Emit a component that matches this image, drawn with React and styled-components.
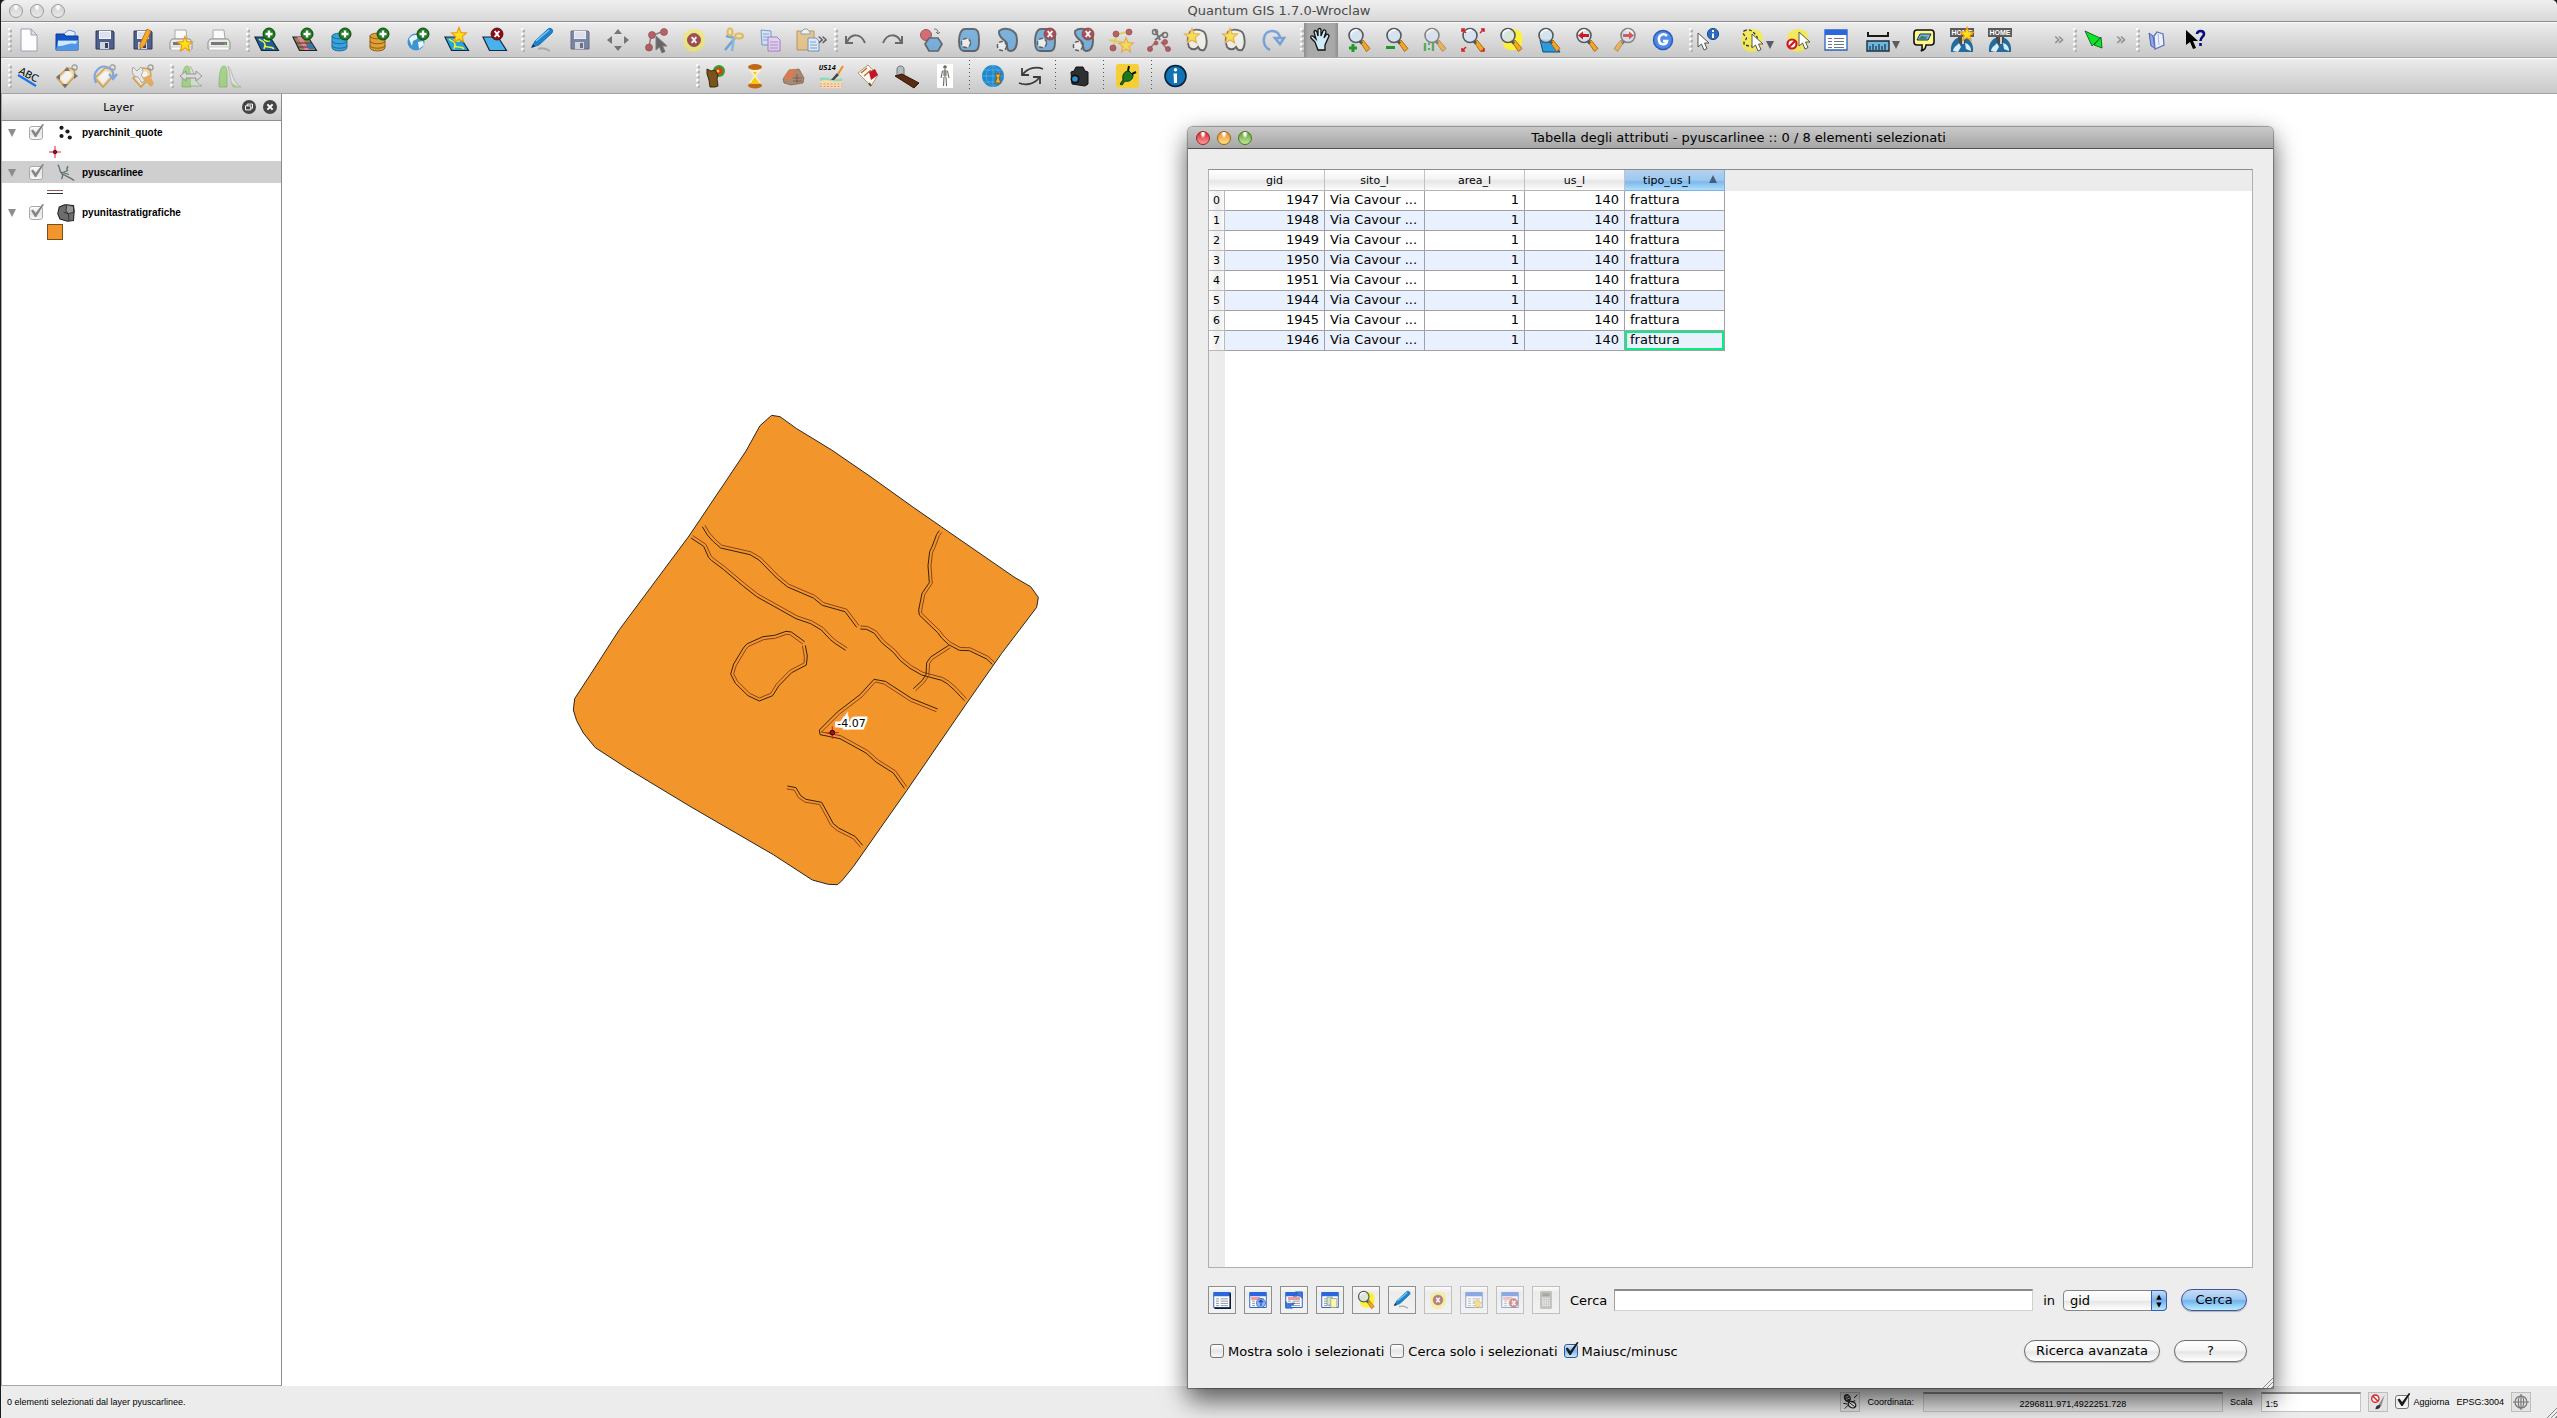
import React, { useState } from "react";
import styled, { createGlobalStyle, css } from "styled-components";

const UI = '"DejaVu Sans", "Noto Sans", sans-serif';
const SMALL = '"Liberation Sans", Arial, sans-serif';

const Global = createGlobalStyle`
  *, *::before, *::after { box-sizing: border-box; }
  html, body { margin: 0; height: 100%; background: #1b1b1f; overflow: hidden; }
  body { font-family: ${UI}; font-size: 13px; color: #000; }
  button, input, select { font: inherit; color: inherit; margin: 0; }
`;

/* ---------- icon drawings, all on a 24 x 24 grid ---------- */

const Plus = ({ x = 14, y = 6 }) => (
  <g>
    <circle cx={x} cy={y} r="6" fill="#1f7a22" stroke="#0c4a10" />
    <path d={`M${x - 3.5} ${y}h7M${x} ${y - 3.5}v7`} stroke="#fff" strokeWidth="2.4" />
  </g>
);
const Cross = ({ x = 14, y = 6, r = 6, fill = "#8c0d14" }) => (
  <g>
    <circle cx={x} cy={y} r={r} fill={fill} stroke="#4e0509" strokeWidth=".8" />
    <path d={`M${x - 2.3} ${y - 3}l4.6 6M${x + 2.3} ${y - 3}l-4.6 6`} stroke="#fff" strokeWidth="2" />
  </g>
);
const STAR = "M0-7.5L2-2.4 7.4-2 3.2 1.6 4.6 7 0 4-4.6 7-3.2 1.6-7.4-2-2-2.4Z";
const Star = ({ x, y, s = 1 }) => (
  <path d={STAR} transform={`translate(${x} ${y}) scale(${s})`} fill="#ffe01a" stroke="#f09a12" strokeWidth="1.2" />
);
const Lens = ({ children, under }) => (
  <g>
    {under}
    <path d="M13 14l3-2 7 8.5-3.5 3z" fill="#f3a526" stroke="#9a5c0c" strokeWidth=".8" />
    <path d="M12 12.5l3 3" stroke="#555" strokeWidth="2.6" />
    <circle cx="9" cy="7.5" r="7" fill="#d4e4f3" fillOpacity=".85" stroke="#55595e" strokeWidth="1.6" />
    <path d="M4 6a5.4 5.4 0 0 1 7-3.6" stroke="#fff" strokeWidth="1.4" fill="none" />
    {children}
  </g>
);
const Sheet = ({ fill, stroke = "#14263a" }) => (
  <path d="M0 9h15l8.5 13.5H6.5z" fill={fill} stroke={stroke} strokeWidth="1.2" />
);
const Vec = () => (
  <path d="M4 11c3 3 6 2 6 6s6 0 9 4M9 11c1 3 5 2 6 2M10 17l-1 4" stroke="#e4ef3c" strokeWidth="1.5" fill="none" />
);
const Disk = () => (
  <g>
    <path d="M3 3h17l1 1v17H3z" fill="#4e5f8e" stroke="#2e3858" />
    <path d="M6 3h12v8H6z" fill="#f4f6fb" />
    <path d="M7 5h10M7 7h10M7 9h10" stroke="#b9c2d6" strokeWidth=".8" />
    <path d="M7 14h9v7H7z" fill="#cfd4de" />
    <path d="M12 15h3v5h-3z" fill="#39415c" />
  </g>
);
const Printer = () => (
  <g>
    <path d="M6 2h11l1 9H6z" fill="#fafafa" stroke="#a9a9a9" />
    <path d="M3 11h18l2 3v7H1v-7z" fill="#e9e9e9" stroke="#8f8f8f" />
    <path d="M4 14h16v3H4z" fill="#777" />
    <path d="M2 19h20v3H2z" fill="#fbfbfb" stroke="#b3b3b3" strokeWidth=".6" />
    <circle cx="18" cy="16" r="1" fill="#62c34a" />
  </g>
);
const Cyl = ({ a, b }) => (
  <g stroke={b} strokeWidth=".9" fill={a}>
    <path d="M1 8v11.500c0 4.500 15 4.500 15 0V8z" />
    <ellipse cx="8.500" cy="8" rx="7.500" ry="2.800" />
    <path d="M1 13c0 3.600 15 3.600 15 0M1 17.500c0 3.600 15 3.600 15 0" fill="none" />
  </g>
);
const Globe = () => (
  <g>
    <circle cx="9" cy="14" r="8.500" fill="#3f93cf" />
    <path d="M2 11c3-5 6-4 9-4l-1 4-4 2-1 5zM11 14l5-1 1 4-5 4z" fill="#e8f4fb" />
  </g>
);
const Node = ({ x, y, r = 3 }) => <circle cx={x} cy={y} r={r} fill="#a8242c" stroke="#651015" strokeWidth=".7" />;
const Pointer = ({ x = 0, y = 0, fill = "#fff" }) => (
  <path d="M0 0v14l3.500-3 2.500 6 3-1.500-2.500-5.500H11z" transform={`translate(${x} ${y})`} fill={fill} stroke="#555" strokeWidth="1" />
);
const Tag = () => (
  <g>
    <path d="M2 14L12 4l7 1 1 7-10 11z" fill="#f6d79a" stroke="#c98a1c" strokeWidth="1.6" />
    <path d="M5 14l7-7 4 1 1 4-7 8z" fill="#fff" />
    <circle cx="19.500" cy="3.500" r="2.600" fill="none" stroke="#777" strokeWidth="1.200" />
  </g>
);
const Grid = () => (
  <g>
    <path d="M1 2h22v20H1z" fill="#fff" stroke="#2c62bf" strokeWidth="1.300" />
    <path d="M1 2h22v5H1z" fill="#2a66dd" />
    <path d="M4 10.500h4M10 10.500h10M4 13.500h4M10 13.500h10M4 16.500h4M10 16.500h10M4 19.500h4M10 19.500h10" stroke="#6d7682" />
  </g>
);
const Pencil = () => (
  <g>
    <path d="M8 21c5-2 9 0 12 2" stroke="#a9a9a9" strokeWidth="1.800" fill="none" />
    <path d="M2 19l3-6L18 1c3-2 6 1 4 4L9 17z" fill="#1c83d0" stroke="#1465a8" strokeWidth=".8" />
    <path d="M6 13L19 2" stroke="#7cc5f3" strokeWidth="1.600" />
    <path d="M1 20l2-4 2.500 2.500z" fill="#0a3d6e" />
  </g>
);
const Blob = ({ d }) => <path d={d} fill="#4c9cd8" stroke="#2c3238" strokeWidth="1.900" />;
const Hole = ({ x, y }) => (
  <circle cx={x} cy={y} r="4.600" fill="#f6f6f6" stroke="#2a2a2a" strokeWidth="1.500" strokeDasharray="4 2" />
);
const FULL = "M8 1h9c4 0 5 4 5 10s0 12-5 12H7c-4 0-5-4-5-10S4 1 8 1z";
const HALF = "M4 3c5-4 18-3 18 9 0 8-3 11-7 11-3 0-3-3-3-7s-9-5-8-13z";
const GHOST = "M5 4c4-4 15-3 16 4 1 5 1 11-2 14-3 1-5-1-6-3-2 3-7 3-9 0-2-5-1-11 1-15z";
const Home = () => (
  <g>
    <path d="M1 24C0 15 5 9 12 9s12 6 11 15z" fill="#256b9e" />
    <path d="M3 23c1-5 4-5 6-8l2 4-3 5zM15 15c4 1 6 4 6 8l-5-2z" fill="#d9edf7" />
    <path d="M8 9h8l-1 6q-3 3-6 0z" fill="#4a4a4a" />
    <path d="M12 9h2v7h-2z" fill="#cfcfcf" />
    <rect y="0" width="24" height="9" fill="#5b5b5b" />
    <text x="12" y="7" fontSize="7" fontWeight="700" textAnchor="middle" fill="#fff" fontFamily="Liberation Sans">HOME</text>
  </g>
);
const Halo = () => <path d="M5 3c6-4 16-2 17 4 2 6 0 14-6 16S3 23 2 16 1 6 5 3z" fill="#f6ec3c" fillOpacity=".8" />;

const ICONS = {
  file: <path d="M4 1h10l6 6v16H4zM14 1v6h6" fill="#fdfdff" stroke="#9aa0ac" />,
  open: <g><path d="M6 8l8-6 6 2v5z" fill="#e6f0fb" stroke="#6c94cf" /><path d="M1 6h8l2 2h12v14H1z" fill="#1553c4" stroke="#0e3c92" /><path d="M1 22l2-10h20v10z" fill="#4f96ea" /><path d="M3 13h19l-1 3c-6-2-10 2-18 2z" fill="#cfe6fb" /></g>,
  save: <Disk />,
  saveAs: <g><Disk /><path d="M9 16L16 1l4 2-6 14-5 4z" fill="#f7a928" stroke="#b86b0b" strokeWidth=".8" /></g>,
  printNew: <g><Printer /><Star x={16} y={16} /></g>,
  print: <Printer />,
  addVector: <g><Sheet fill="#1c5fa0" /><Vec /><Plus /></g>,
  addRaster: <g><Sheet fill="#9e7d55" /><path d="M4 9h5l7 13h-4z" fill="#ee7f97" /><path d="M3 15h16M5 19h16" stroke="#3c3a36" /><path d="M13 16h6l3 5h-6z" fill="#3674ad" /><Plus /></g>,
  addDb: <g><Cyl a="#37a3dc" b="#17648f" /><Plus /></g>,
  addDb2: <g><Cyl a="#dfa136" b="#80520d" /><Plus /></g>,
  addWms: <g><Globe /><Plus x={16} /></g>,
  newVector: <g><Sheet fill="#2aa3d8" /><Vec /><Star x={14} y={7} /></g>,
  removeLayer: <g><Sheet fill="#49b1ec" /><Cross /></g>,
  pencil: <Pencil />,
  move: <path d="M12 1l4 5H8zM12 23l4-5H8zM1 12l5-4v8zM23 12l-5-4v8z" fill="#444" />,
  node: <g><path d="M5 19L7 8l13-5" stroke="#555" strokeWidth="1.400" fill="none" /><Node x={5} y={19.500} r={3.500} /><Node x={8} y={7} r={3.500} /><Node x={20} y={4} r={3.500} /><Pointer x={12} y={8} fill="#333" /></g>,
  del: <g><Halo /><Cross x={12} y={12} r={6.500} /></g>,
  cut: <g><path d="M6 8l9 2-10 12" stroke="#3f8fce" strokeWidth="2.600" fill="none" /><path d="M14 9l-2 14" stroke="#66ade2" strokeWidth="2.600" /><ellipse cx="10" cy="4" rx="2.500" ry="3.500" fill="none" stroke="#e5a91c" strokeWidth="2.200" /><ellipse cx="19" cy="8" rx="4" ry="2.500" fill="none" stroke="#e5a91c" strokeWidth="2.200" /></g>,
  copy: <g><path d="M3 2l10 1v14H4z" fill="#cfe3fa" stroke="#4279c4" /><path d="M5 6h6M5 9h6M5 12h6" stroke="#5a8fd0" /><path d="M10 9h9l3 3v11H10z" fill="#e3cdf6" stroke="#8c55bd" /><path d="M12 14h8M12 17h8M12 20h8" stroke="#9c6cc8" /></g>,
  paste: <g><path d="M1 3h17v19H1z" fill="#e9b968" stroke="#a8732a" /><path d="M5 4l3-3h3l3 3v2H5z" fill="#f4f6f8" stroke="#6780a0" /><path d="M12 10h8l3 3v10H12z" fill="#e7f1fc" stroke="#3c74c0" /><path d="M14 14h6M14 17h7M14 20h7" stroke="#4c85cc" /></g>,
  undo: <path d="M3 8v7h7M4 14C8 5 18 5 22 15" stroke="#333" strokeWidth="2" fill="none" />,
  redo: <path d="M21 8v7h-7M20 14C16 5 6 5 2 15" stroke="#333" strokeWidth="2" fill="none" />,
  simplify: <g><circle cx="7" cy="7" r="5.500" fill="#cf3940" stroke="#6d1f22" /><path d="M10 10h9l4 6-4 7h-9l-4-7z" fill="#4c9cd8" stroke="#2c3238" strokeWidth="1.700" /><path d="M15 1c3 0 4 1 4 4M17 4l2 2 2-2" stroke="#444" fill="none" /></g>,
  ring: <g><Blob d={FULL} /><Hole x={9} y={15} /></g>,
  part: <g><Blob d={HALF} /><Hole x={7} y={18} /></g>,
  delRing: <g><Blob d={FULL} /><Hole x={9} y={15} /><Cross x={17} /></g>,
  delPart: <g><Blob d={HALF} /><Hole x={7} y={18} /><Cross x={17} /></g>,
  reshape: <g><path d="M4 20l4-14 11-2M0 12l18 3" stroke="#e5c72a" strokeWidth="1.800" fill="none" /><Node x={4} y={20} /><Node x={7} y={6} /><Node x={20} y={4} /><Star x={17} y={17} /></g>,
  split: <g><path d="M8 2l5 10M17 5L8 12" stroke="#444" strokeWidth="2" /><circle cx="8" cy="4" r="2.500" fill="none" stroke="#444" strokeWidth="1.500" /><circle cx="18" cy="7" r="2.500" fill="none" stroke="#444" strokeWidth="1.500" /><path d="M2 21l7-7M14 14l7 8" stroke="#a33" strokeWidth="1.500" /><Node x={3} y={21} r={2.500} /><Node x={9} y={15} r={2} /><Node x={18} y={14} r={2.500} /><Node x={21} y={21} r={2.500} /></g>,
  merge: <g><path d={GHOST} fill="#f8f8f0" stroke="#333" strokeWidth="1.900" /><Star x={7} y={8} /></g>,
  rotate: <path d="M9 22C0 18 1 3 11 3c6 0 8 4 8 8m-5-1h9l-4 6z" stroke="#4c86d6" strokeWidth="2.600" fill="none" />,
  hand: <path d="M6 14L2 10c-1-2 1-3 3-1l2 2L5 4c0-2 2-2 3 0l1 4V2c0-2 3-2 3 0v6l2-5c1-2 3-1 3 1l-2 6 2-3c1-2 3 0 3 1l-4 9v5H9z" fill="#cfeaf8" stroke="#111" strokeWidth="1.300" />,
  zoomIn: <Lens><path d="M2 20h8M6 16v8" stroke="#1f9a28" strokeWidth="3" /></Lens>,
  zoomOut: <Lens><path d="M1 19.500h9" stroke="#1f9a28" strokeWidth="3" /></Lens>,
  zoomNative: <Lens><path d="M2 15v8M10 15v8" stroke="#1f9a28" strokeWidth="2.400" /><path d="M6 15v2M6 20v2" stroke="#1f9a28" strokeWidth="2" /></Lens>,
  zoomFull: <Lens><path d="M1 4V1h3M20 1h3v3M1 20v3h3M1 1l4 4M23 1l-4 4M1 23l4-4M20 23h3v-3" stroke="#d41f22" strokeWidth="1.500" fill="none" /></Lens>,
  zoomSel: <Lens under={<path d="M8 2c7-2 14 0 15 5s0 14-7 15S3 20 4 13z" fill="#fbf03a" />} />,
  zoomLayer: <Lens under={<path d="M3 12h12l8 12H6z" fill="#299be0" stroke="#0e4c78" />} />,
  zoomLast: <Lens><path d="M3 7.500l5-4v2.500h6v3H8v2.500z" fill="#d11a1f" /></Lens>,
  zoomNext: <g transform="matrix(-1 0 0 1 24 0)"><Lens><path d="M3 7.500l5-4v2.500h6v3H8v2.500z" fill="#d11a1f" /></Lens></g>,
  refresh: <g><circle cx="12" cy="12" r="9.500" fill="#4f8ae6" stroke="#2a5cb8" strokeWidth="1.500" /><path d="M16 8c-4-4-9 0-8 4 0 5 7 6 8 1h-4" stroke="#fff" strokeWidth="2.600" fill="none" /></g>,
  identify: <g><Pointer x={0} y={5} /><circle cx="15" cy="6" r="5.600" fill="#2c6cc0" stroke="#1b4a8a" /><path d="M15 2v2M15 5.500V10" stroke="#fff" strokeWidth="2" /></g>,
  select: <g><Halo /><path d="M4 3c5-3 8 0 10 2s5 5 2 8-2 6-6 5-6 0-6-3 4-4 2-6-4-4-2-6z" fill="none" stroke="#333" strokeWidth="1.300" strokeDasharray="3 2" /><Pointer x={12} y={6} /></g>,
  deselect: <g><Halo /><Pointer x={13} y={4} /><circle cx="6" cy="16" r="4.500" fill="#fff" stroke="#d3161b" strokeWidth="2.200" /><path d="M3 19l6-6" stroke="#d3161b" strokeWidth="2.200" /></g>,
  table: <Grid />,
  measure: <g><path d="M2 4v4h20V4" stroke="#1a1a1a" strokeWidth="2" fill="none" /><path d="M1 13h22v10H1z" fill="#6fb6df" stroke="#1c2d3a" strokeWidth="1.400" /><path d="M4 22v-4M7 22v-6M10 22v-4M13 22v-6M16 22v-4M19 22v-6" stroke="#183246" strokeWidth="1.200" /></g>,
  tip: <g><path d="M5 2h14q3 0 3 3v9q0 3-3 3h-5c0 3-2 5-5 6 2-2 1-4 1-6H5q-3 0-3-3V5q0-3 3-3z" fill="#fdf98b" stroke="#111" strokeWidth="1.600" /><path d="M8 6h11l-3 6H5z" fill="#7cb6ef" stroke="#17324e" /><path d="M9 8c3-1 3 2 7 0l-2 3H7z" fill="#3e8a4c" /></g>,
  homeNew: <g><Home /><Star x={17} y={6} s={0.900} /></g>,
  home: <Home />,
  green: <g fill="#0be62b" stroke="#064f10" strokeWidth=".8"><path d="M3 3l15 7-8 8z" /><path d="M20 20l-1-11-7 8z" /></g>,
  notebook: <g><path d="M4 5l4 3 2 12-4-2z" fill="#8fa6e3" stroke="#4a62b6" /><path d="M9 8l3-4 6 2 1 11-9 4z" fill="#eef1fc" stroke="#5e75c4" strokeWidth="1.300" /><path d="M13 6l1 11" stroke="#a6b5e6" /></g>,
  whatsThis: <g><path d="M3 2v15l4-3 3 7 3-1-3-7h5z" fill="#000" /><path d="M14 6c0-4 7-4 7 0 0 3-3.500 3-3.500 7M17.500 15v3" stroke="#0b0b80" strokeWidth="2.600" fill="none" /></g>,
  abc: <g><path d="M1 11l18 11" stroke="#1477ee" strokeWidth="2.200" /><text x="1" y="9" transform="rotate(28 1 9)" fontSize="10" fontFamily="DejaVu Sans">ABC</text></g>,
  tagMove: <g><Tag /><path d="M12 3l3 4H9zM10 24l3-4H7zM1 13l4-3v6zM23 12l-4-3v6z" fill="#444" /></g>,
  tagRotate: <g><Tag /><path d="M3 19C-2 8 8-1 16 4c4 2 5 6 4 9m-4-3l4 5 4-5" stroke="#5a8ed6" strokeWidth="2.200" fill="none" /></g>,
  tagEdit: <g><Tag /><path d="M2 3l4 4 4-4c3 3 2 6 0 8l4 5-3 3-4-6C2 13 0 8 2 3z" fill="#eee" stroke="#888" /><path d="M11 14l8-3 4 9-3 3z" fill="#e79a2c" /></g>,
  histStretch: <g><path d="M3 23C3 12 4 2 8 2s4 9 4 21z" fill="#8ccd62" stroke="#5d9a39" strokeWidth=".7" /><path d="M11 2c5 5 4 17 12 20H12" fill="#cfe3c2" stroke="#888" strokeWidth=".8" /><path d="M1 12l6-5v3h10V7l6 5-6 5v-3H7v3z" fill="#ddd" stroke="#777" /></g>,
  hist: <g><path d="M2 23C2 12 3 2 7 2s3 9 3 21z" fill="#8ccd62" stroke="#5d9a39" strokeWidth=".7" /><path d="M11 2c5 5 4 17 13 21H16c-3-6-3-15-5-21z" fill="#ebebeb" stroke="#999" strokeWidth=".8" /><path d="M15 18c2 3 5 4 9 5h-8z" fill="#8ccd62" /></g>,
  amphora: <g><circle cx="14" cy="7" r="6" fill="#3f9a2c" /><circle cx="14" cy="7" r="3.500" fill="#d93a20" /><circle cx="13" cy="7" r="1.500" fill="#f3c93a" /><path d="M2 5l4 2 4-1 3 5-1 4 1 7-3 1H5l-1-7-2-6z" fill="#7a541d" stroke="#3c270a" /></g>,
  hourglass: <g><ellipse cx="12" cy="3" rx="7" ry="3" fill="#c2671a" /><ellipse cx="12" cy="21.500" rx="7" ry="3" fill="#c2671a" /><path d="M6 6h12l-5 6 5 7H6l5-7z" fill="#fdf3c4" /><path d="M10 8h4l-2 3zM12 13l5 7H7z" fill="#f8c90b" /></g>,
  house: <g><path d="M2 15L8 6l10-1 5 9-1 5-12 2-7-2z" fill="#a98973" stroke="#6a5141" strokeWidth=".6" /><path d="M2 15L8 6l8-1-6 10z" fill="#dd7a4e" /><path d="M12 14h9M12 17h9M16 10v9" stroke="#6f5547" strokeWidth=".8" /></g>,
  us14: <g><path d="M1 14h22v10H1z" fill="#f3dfa6" /><path d="M1 14c8-2 14 3 22 0v3c-8 2-14-3-22 0z" fill="#8fd6c4" /><path d="M1 20h22M1 22.500h22" stroke="#e887a0" strokeDasharray="2 1.500" /><path d="M12 16l6-7 2 2-5 5z" fill="#444" /><path d="M19 10l5-8" stroke="#ef8d20" strokeWidth="2" /><text x="0" y="6" fontSize="7" fontWeight="700" fontStyle="italic" fontFamily="DejaVu Sans Mono">US14</text></g>,
  cards: <g><path d="M1 9l10-8 10 10-7 11z" fill="#fbf8f2" stroke="#a4825a" strokeWidth=".8" /><path d="M4 9l6-5M7 12l7-6" stroke="#c06a27" strokeWidth="1.400" /><path d="M12 8l6-3 3 6-7 5z" fill="#c31522" /><path d="M12 19l2 3" stroke="#6d4a1c" strokeWidth="2" /></g>,
  grave: <g><path d="M2 13V5c0-4 7-4 7 0v8z" fill="#b9bcbe" stroke="#707376" /><path d="M0 12l7-2 17 9-5 5z" fill="#5a2d13" stroke="#341706" /></g>,
  skeleton: <g><rect x="4" width="16" height="24" fill="#fff" /><circle cx="12" cy="3" r="1.800" fill="#6d6a60" /><path d="M12 5v8M9.500 7h5M10 9h4M10 11h4M9.500 7l-1.500 7M14.500 7l1.500 7M11 13l-.5 9M13 13l.5 9" stroke="#6d6a60" strokeWidth="1.100" fill="none" /></g>,
  globeTime: <g><circle cx="12" cy="12" r="11" fill="#1f87cd" /><path d="M1 12h22M12 1v22M3 6h18M3 18h18M12 1C3 8 3 16 12 23M12 1c9 7 9 15 0 22" stroke="#62b4e4" strokeWidth=".7" fill="none" /><path d="M14 10h6l-2 4 2 5h-6l2-5z" fill="#e9b53b" stroke="#8a5412" /></g>,
  sync: <g fill="none" stroke="#3c3c3c" strokeWidth="1.800"><path d="M24 5C17 2 9 4 4 10M3 4v7h7" /><path d="M0 19c7 3 15 1 20-5M21 20v-7h-7" /></g>,
  camera: <g><path d="M4 8l3-1 2-4h7l2 4 3 1v12l-3 2-13-2z" fill="#2d2f31" stroke="#111" /><circle cx="8" cy="15" r="4.500" fill="#111" /><circle cx="8" cy="15" r="2.800" fill="#2d8fd4" /></g>,
  plug: <g><rect x="1" width="23" height="24" rx="3" fill="#f5cf35" /><path d="M5 20l3-4c-1-5 1-9 6-9l4 4c0 5-4 7-8 6l-3 4z" fill="#1b7a1d" stroke="#0a330b" /><path d="M13 7l1-5M17 10l4-2" stroke="#111" strokeWidth="2" /></g>,
  info: <g><circle cx="12.500" cy="12" r="10.500" fill="#1272b6" stroke="#06233a" strokeWidth="1.600" /><circle cx="12.500" cy="5.800" r="1.700" fill="#fff" /><path d="M10.500 9.500h3.500V19h-3z" fill="#fff" /></g>,
  gridDark: <g><Grid /><path d="M23 3v20H2" stroke="#0b1c38" strokeWidth="2" fill="none" /></g>,
  gridTop: <g><Grid /><path d="M3 8h12v4H3z" fill="#f29a9a" /><circle cx="16" cy="16" r="6" fill="#8fb4f0" stroke="#2f66cc" /><path d="M16 20v-7M13 15l3-3 3 3" stroke="#1d4fb4" strokeWidth="1.600" fill="none" /></g>,
  gridInvert: <g><Grid /><path d="M4 8h16v4H4z" fill="#f29a9a" /><path d="M1 14v9h9l-3-3c3 0 5-2 6-4h-4c-2 1-3 1-5 1zM23 10V1h-9l3 3c-3 0-5 1-6 3h4c2-1 3-1 5 0z" fill="#3a7be0" stroke="#1d52ae" strokeWidth=".7" /></g>,
  gridCopy: <g><Grid /><path d="M8 8h7v11H8z" fill="#d3e6c6" stroke="#7a9a8a" /><path d="M13 10h8v12h-8z" fill="#fdf3b4" stroke="#9aa77a" /></g>,
  gridNew: <g><Grid /><Star x={17} y={17} s={0.800} /></g>,
  gridDel: <g><Grid /><path d="M3 8h12v4H3z" fill="#f29a9a" /><Cross x={17} y={16} r={5.500} fill="#e02a2a" /></g>,
  calc: <g><path d="M5 1h14v22H5z" fill="#9f9f99" stroke="#66665e" /><path d="M7 3h10v4H7z" fill="#5c6859" /><path d="M7 10h10M7 13h10M7 16h10M7 19h10" stroke="#e8e8e2" strokeWidth="1.800" strokeDasharray="2 1" /></g>,
  points: <g fill="#1a1a1a"><circle cx="6" cy="5" r="2.800" /><circle cx="14" cy="10" r="2.800" /><circle cx="6" cy="16" r="2.800" /><circle cx="17" cy="18" r="2.800" /></g>,
  lines: <path d="M1 1c4 4 1 7 5 11s10 5 17 10M6 12l8-3c-2-3 0-5 1-6M6 12c3 3 1 6 0 8M9 12l7 2" fill="none" stroke="#5e6e74" strokeWidth="1.700" />,
  polys: <g><path d="M3 4l7-3 12 1 1 7-1 13-8 1-10-3-3-7z" fill="#6d6d6d" stroke="#222" strokeWidth="1.400" /><path d="M13 1l9 2v8l-7 2-3-4z" fill="#979797" stroke="#222" /><path d="M9 11l6 2 1 9" stroke="#222" fill="none" /></g>,
  toggle: <g><ellipse cx="8" cy="6" rx="5" ry="6" fill="#2b2b2b" transform="rotate(-25 8 6)" /><path d="M5 5l5-2M6 8l6-2" stroke="#eee" strokeWidth="1.200" /><ellipse cx="15" cy="16" rx="6" ry="4.500" fill="#fff" stroke="#222" strokeWidth="2" transform="rotate(30 15 16)" /><path d="M11 13l8 6M4 22l6-6M18 6l5-5M2 14l6 1M14 12l6-2" stroke="#222" strokeWidth="1.500" /></g>,
  brush: <g><path d="M22 1l-9 15 4 2z" fill="#8d8d8d" /><path d="M8 23c1-6 4-7 8-6 0 4-3 6-8 6z" fill="#333" /><circle cx="8" cy="7" r="5.500" fill="#fff" fillOpacity=".6" stroke="#d9232a" strokeWidth="2" /><path d="M4 3l8 8" stroke="#d9232a" strokeWidth="2" /></g>,
  crs: <g fill="none" stroke="#777" strokeWidth="1.800"><circle cx="12" cy="12" r="9" /><ellipse cx="12" cy="12" rx="4" ry="9" /><path d="M0 12h24M12 0v24" /></g>,
  cross: <g><path d="M12 0v24M0 12h24" stroke="#f2123d" strokeWidth="2" /><circle cx="12" cy="12" r="3.500" fill="#a3121b" stroke="#1d0507" strokeWidth="1.600" /></g>,
  restore: <g><circle cx="12" cy="12" r="12" fill="#454545" /><path d="M6 10h9v7H6zM9 10V7h9v7h-3" fill="none" stroke="#fff" strokeWidth="1.700" /></g>,
  close: <g><circle cx="12" cy="12" r="12" fill="#454545" /><path d="M7.500 7.500l9 9M16.500 7.500l-9 9" stroke="#fff" strokeWidth="3.600" /></g>,
};

const Glyph = styled.svg`
  display: block;
  flex: none;
  overflow: visible;
  width: ${(p) => p.$size}px;
  height: ${(p) => p.$size}px;
  opacity: ${(p) => (p.$dim ? 0.68 : 1)};
`;
const Icon = ({ name, size = 24, dim }) => (
  <Glyph $size={size} $dim={dim} viewBox="0 0 24 24" aria-hidden="true">{ICONS[name]}</Glyph>
);

/* ---------- main window ---------- */

const Screen = styled.div`
  min-height: 100vh;
  display: flex;
  flex-direction: column;
  padding-left: 1px;
  position: relative;
`;
const TitleBar = styled.header`
  height: 22px;
  flex: none;
  display: grid;
  grid-template-columns: 1fr auto 1fr;
  align-items: center;
  padding: 0 8px;
  border-bottom: 1px solid ${(p) => (p.$active ? "#515151" : "#8e8e8e")};
  border-radius: 5px 5px 0 0;
  background: ${(p) => (p.$active ? "linear-gradient(#c9c9c9, #a6a6a6)" : "linear-gradient(#f0f0f0, #d8d8d8)")};
  color: ${(p) => (p.$active ? "#000" : "#4a4a4a")};
`;
const WindowTitle = styled.h1`
  margin: 0;
  padding-left: ${(p) => (p.$inset ? 16 : 0)}px;
  font-size: 13px;
  font-weight: 400;
  line-height: 20px;
  white-space: nowrap;
`;
const Lights = styled.div`
  display: flex;
  gap: 7px;
`;
const Light = styled.button`
  width: 14px;
  height: 14px;
  padding: 0;
  border: 1px solid ${(p) => p.$edge};
  border-radius: 50%;
  background: radial-gradient(ellipse at 50% 12%, #fff 0 12%, transparent 34%), linear-gradient(${(p) => p.$from}, ${(p) => p.$to});
`;
const TrafficLights = ({ active }) => {
  const tones = active
    ? [["#8e2a26", "#d5202a", "#ff9c98"], ["#9a5f1e", "#e88a2c", "#ffe486"], ["#4b7327", "#5c9e34", "#bfea92"]]
    : [["#999", "#cfcfcf", "#e9e9e9"], ["#999", "#cfcfcf", "#e9e9e9"], ["#999", "#cfcfcf", "#e9e9e9"]];
  const names = ["Chiudi", "Riduci", "Ingrandisci"];
  return (
    <Lights>
      {tones.map(([edge, from, to], i) => (
        <Light key={names[i]} type="button" aria-label={names[i]} $edge={edge} $from={from} $to={to} />
      ))}
    </Lights>
  );
};

const Toolbar = styled.nav`
  height: 36px;
  flex: none;
  display: flex;
  align-items: center;
  padding-left: 7px;
  border-top: 1px solid #fafafa;
  border-bottom: 1px solid #a3a3a3;
  background: linear-gradient(#ececec, #c8c8c8);
`;
const Group = styled.div`
  display: flex;
  align-items: center;
  gap: 4px;
  height: 100%;
  margin-left: ${(p) => p.$before || 0}px;
  &::before {
    content: "";
    width: 4px;
    height: 24px;
    background:
      radial-gradient(circle at 1px 1px, #fbfbfb 1px, transparent 2px) 0 0 / 4px 5px,
      radial-gradient(circle at 3px 3px, #b2b2b2 1px, transparent 2px) 0 0 / 4px 5px;
    margin-right: -4px;
  }
`;
const Tool = styled.button`
  height: 34px;
  width: ${(p) => (p.$menu ? 40 : 34)}px;
  flex: none;
  display: flex;
  align-items: center;
  justify-content: center;
  gap: 2px;
  padding: 0;
  margin-left: ${(p) => p.$before || 0}px;
  border: 0;
  background: none;
  ${(p) => p.$pressed && css`
    background: linear-gradient(90deg, #8d8d8d, #a9a9a9 12%, #a9a9a9 88%, #8d8d8d);
  `}
`;
const Caret = styled.span`
  margin-top: 10px;
  border: 4px solid transparent;
  border-top: 8px solid #5c5c5c;
  border-bottom: 0;
`;
const More = styled.button`
  width: ${(p) => p.$w || 12}px;
  margin-left: ${(p) => p.$before || 0}px;
  padding: 0 0 2px;
  border: 0;
  background: none;
  color: ${(p) => (p.$dark ? "#555" : "#888")};
  font-size: 18px;
  line-height: 20px;
`;
const Divider = styled.span`
  width: 6px;
  height: 32px;
  background: repeating-linear-gradient(#555 0 1px, transparent 1px 4px) center / 1px 100% no-repeat;
`;

const TOOLBAR_TOP = [
  { items: [["file", "Nuovo"], ["open", "Apri"], ["save", "Salva"], ["saveAs", "Salva come"], ["printNew", "Nuova stampa"], ["print", "Stampe"]] },
  { before: 10, items: [["addVector", "Aggiungi vettore"], ["addRaster", "Aggiungi raster"], ["addDb", "Aggiungi PostGIS"], ["addDb2", "Aggiungi SpatiaLite"], ["addWms", "Aggiungi WMS"], ["newVector", "Nuovo vettore"], ["removeLayer", "Rimuovi layer"]] },
  { before: 9, items: [["pencil", "Modifica"], ["save", "Salva modifiche", { dim: 1 }], ["move", "Sposta", { dim: 1 }], ["node", "Nodi", { dim: 1 }], ["del", "Elimina", { dim: 1 }], ["cut", "Taglia", { dim: 1 }], ["copy", "Copia", { dim: 1 }], ["paste", "Incolla", { dim: 1 }], ["more", "Altri strumenti", { before: -12, w: 8, dark: 1 }]] },
  { before: 9, items: [["undo", "Annulla", { dim: 1 }], ["redo", "Ripeti", { dim: 1 }], ["simplify", "Semplifica", { dim: 1 }], ["ring", "Aggiungi anello", { dim: 1 }], ["part", "Aggiungi parte", { dim: 1 }], ["delRing", "Elimina anello", { dim: 1 }], ["delPart", "Elimina parte", { dim: 1 }], ["reshape", "Modifica forma", { dim: 1 }], ["split", "Dividi", { dim: 1 }], ["merge", "Unisci", { dim: 1 }], ["merge", "Unisci attributi", { dim: 1 }], ["rotate", "Ruota", { dim: 1 }]] },
  { before: 10, items: [["hand", "Sposta mappa", { pressed: 1 }], ["zoomIn", "Zoom avanti"], ["zoomOut", "Zoom indietro"], ["zoomNative", "Zoom nativo", { dim: 1 }], ["zoomFull", "Zoom completo"], ["zoomSel", "Zoom selezione"], ["zoomLayer", "Zoom layer"], ["zoomLast", "Zoom precedente"], ["zoomNext", "Zoom successivo", { dim: 1 }], ["refresh", "Aggiorna mappa"]] },
  { before: 9, items: [["identify", "Informazioni"], ["select", "Seleziona", { before: 6, menu: 1 }], ["deselect", "Deseleziona"], ["table", "Tabella attributi"], ["measure", "Misura", { before: 6, menu: 1 }], ["tip", "Suggerimenti"], ["homeNew", "Nuovo segnalibro"], ["home", "Segnalibri"], ["more", "Altri attributi", { before: 32 }]] },
  { before: 8, items: [["green", "Direzioni"], ["more", "Altre direzioni"]] },
  { before: 9, items: [["notebook", "Guida"], ["whatsThis", "Che cos'e"]] },
];
const TOOLBAR_BOTTOM = [
  { items: [["abc", "Etichette"], ["tagMove", "Sposta etichetta", { dim: 1 }], ["tagRotate", "Ruota etichetta", { dim: 1 }], ["tagEdit", "Cambia etichetta", { dim: 1 }]] },
  { before: 10, items: [["histStretch", "Stira istogramma", { dim: 1 }], ["hist", "Istogramma", { dim: 1 }]] },
  { before: 450, items: [["amphora", "Siti"], ["hourglass", "Periodi"], ["house", "Strutture"], ["us14", "Unita"], ["cards", "Reperti"], ["grave", "Tombe"], ["skeleton", "Individui"], ["divider", "1"], ["globeTime", "Mappa periodi"], ["sync", "Sincronizza"], ["divider", "2"], ["camera", "Immagini"], ["divider", "3"], ["plug", "Configura"], ["divider", "4"], ["info", "Info"]] },
];
const ToolGroups = ({ groups }) =>
  groups.map((g, i) => (
    <Group key={i} $before={g.before}>
      {g.items.map(([name, label, o = {}]) => {
        if (name === "divider") return <Divider key={label} />;
        if (name === "more") return <More key={label} type="button" aria-label={label} $before={o.before} $w={o.w} $dark={o.dark}>»</More>;
        return (
          <Tool key={label} type="button" aria-label={label} $before={o.before} $menu={o.menu} $pressed={o.pressed}>
            <Icon name={name} dim={o.dim} />
            {o.menu && <Caret />}
          </Tool>
        );
      })}
    </Group>
  ));

const Workspace = styled.main`
  flex: 1;
  display: grid;
  grid-template-columns: 281px 1fr;
  background: #fff;
`;
const Dock = styled.aside`
  border: 1px solid #a6a6a6;
  border-top: 0;
  border-right-color: #8b8b8b;
`;
const DockHeader = styled.div`
  height: 27px;
  display: flex;
  align-items: center;
  gap: 7px;
  padding: 0 4px 1px 0;
  border-bottom: 1px solid #8f8f8f;
  background: linear-gradient(#efefef, #c9c9c9);
  h2 {
    flex: 1;
    margin: 0;
    padding-top: 2px;
    text-align: center;
    font-size: 11px;
    font-weight: 400;
    line-height: 16px;
  }
`;
const IconButton = styled.button`
  display: flex;
  padding: 0;
  border: 0;
  background: none;
`;
const Layers = styled.ul`
  margin: 0;
  padding: 0;
  list-style: none;
`;
const LayerRow = styled.div`
  height: 22px;
  display: flex;
  align-items: center;
  padding: 2px 0 0 6px;
  background: ${(p) => (p.$selected ? "#cfcfcf" : "none")};
`;
const Disclosure = styled.span`
  width: 21px;
  &::before {
    content: "";
    display: block;
    width: 0;
    border: 4px solid transparent;
    border-top: 8px solid #8d8d8d;
    border-bottom: 0;
  }
`;
const LayerLabel = styled.label`
  display: flex;
  align-items: center;
  font: 700 10px/14px ${SMALL};
`;
const LayerIcon = styled.span`
  margin: 0 7px 0 14px;
`;
const LayerSymbol = styled.div`
  width: 16px;
  height: 18px;
  display: flex;
  align-items: center;
  justify-content: center;
  margin-left: 45px;
`;
const LineSwatch = styled.span`
  width: 16px;
  height: 4px;
  border: solid #333;
  border-top-color: #8a5a5f;
  border-width: 1px 0;
`;
const FillSwatch = styled.span`
  width: 16px;
  height: 16px;
  border: 1px solid #77501c;
  background: #f2952b;
`;
const Check = styled.input.attrs({ type: "checkbox" })`
  appearance: none;
  position: relative;
  width: 14px;
  height: 14px;
  flex: none;
  border: 1px solid ${(p) => (p.$faded ? "#a9a9a9" : "#767676")};
  border-radius: 3px;
  background: linear-gradient(#fff, #e6e6e6 50%, #f8f8f8);
  ${(p) => p.$blue && css`
    &:checked { border-color: #35559a; background: linear-gradient(#d4e6fa, #7db5ef 50%, #c3ecfd); }
  `}
  &:checked::after {
    content: "";
    position: absolute;
    left: 1px;
    top: -3px;
    width: 13px;
    height: 13px;
    background: ${(p) => (p.$faded ? "#868686" : "#1c1c1c")};
    clip-path: polygon(0 50%, 16% 42%, 36% 70%, 88% 0, 100% 4%, 40% 100%, 30% 100%);
  }
`;

const Canvas = styled.section`
  overflow: hidden;
`;
const MapDrawing = styled.svg`
  display: block;
  width: 500px;
  height: 500px;
  margin: 306px 0 0 278px;
`;

/* vertices in map units, three units to a screen pixel */
const OUTLINE = "635,46 660,50 710,86 815,150 930,229 1060,322 1145,381 1365,533 1412,560 1435,592 1430,622 1325,760 1215,917 1040,1172 880,1400 845,1443 832,1454 805,1453 757,1440 640,1364 390,1219 200,1104 106,1043 70,999 50,962 40,930 44,896 100,810 178,689 387,408 500,240 558,153 600,77";
/* side: which side of the walked line the second stroke runs on */
const CRACKS = [
  { side: -9, pts: [[427, 380], [442, 405], [458, 423], [482, 444], [570, 464], [597, 480], [650, 534], [683, 561], [760, 594], [787, 616], [855, 635], [890, 682]] },
  { side: -9, pts: [[393, 414], [431, 439], [446, 473], [454, 481], [490, 508], [548, 557], [590, 590], [708, 656], [752, 671], [784, 690], [810, 718], [826, 731], [857, 751]] },
  { side: -9, pts: [[901, 687], [920, 688], [943, 700], [965, 728], [1000, 757], [1020, 781], [1050, 805], [1085, 825], [1145, 841], [1163, 852], [1185, 872], [1213, 902]] },
  { side: -9, pts: [[1138, 392], [1130, 403], [1116, 440], [1109, 455], [1104, 497], [1108, 548], [1086, 580], [1076, 630], [1078, 645], [1133, 698], [1145, 714], [1166, 734], [1198, 751], [1228, 752], [1280, 777], [1297, 793]] },
  { side: -9, pts: [[1166, 736], [1112, 771], [1100, 788], [1098, 824], [1086, 842], [1060, 866]] },
  { side: -9, pts: [[1133, 927], [1056, 896], [976, 844], [942, 838], [900, 884], [832, 936], [778, 990], [780, 1004], [840, 1016], [918, 1059], [948, 1086], [1000, 1119], [1033, 1165]] },
  { side: 9, pts: [[682, 1158], [708, 1163], [722, 1187], [738, 1198], [785, 1207], [820, 1271], [836, 1284], [885, 1309], [908, 1336]] },
  { side: -9, pts: [[734, 725], [694, 696], [678, 694], [644, 706], [609, 710], [560, 732], [550, 744], [521, 792], [512, 822], [526, 850], [564, 887], [598, 903], [638, 887], [656, 858], [695, 818], [739, 795], [742, 768], [736, 736]] },
];
const parallel = (pts, d) =>
  pts.map(([x, y], i) => {
    const [ax, ay] = pts[Math.max(0, i - 1)];
    const [bx, by] = pts[Math.min(pts.length - 1, i + 1)];
    const len = Math.hypot(bx - ax, by - ay) || 1;
    return [x - ((by - ay) / len) * d, y + ((bx - ax) / len) * d];
  });
const MapView = () => (
  <MapDrawing viewBox="0 0 1500 1500" role="img" aria-label="Mappa">
    <polygon points={OUTLINE} fill="#f2952b" stroke="#2b2620" strokeWidth="3" />
    {CRACKS.map((c, i) => (
      <g key={i} fill="none" strokeWidth="3">
        <polyline points={c.pts.join(" ")} stroke="#33240e" />
        <polyline points={parallel(c.pts, c.side).join(" ")} stroke="#8f4024" />
      </g>
    ))}
    <path d="M817 979v38M798 998h38" stroke="#f2123d" strokeWidth="3" />
    <circle cx="817" cy="998" r="7" fill="#a3121b" stroke="#1d0507" strokeWidth="3" />
    <text x="832" y="981" fontSize="33" fontFamily="DejaVu Sans" stroke="#fff" strokeWidth="15" paintOrder="stroke">-4.07</text>
  </MapDrawing>
);

/* ---------- status bar ---------- */

const StatusBar = styled.footer`
  height: 32px;
  flex: none;
  display: flex;
  align-items: center;
  gap: 7px;
  padding: 0 26px 0 6px;
  background: #ececec;
  font: 9px/12px ${SMALL};
  position: relative;
`;
const Message = styled.span`
  flex: 1;
`;
const StatusField = styled.input`
  width: ${(p) => p.$w}px;
  height: 20px;
  padding: 3px 3px 0;
  border: 1px solid #c4c4c4;
  border-top: 2px solid #8b8b8b;
  background: ${(p) => (p.readOnly ? "#e6e6e6" : "#fff")};
  text-align: ${(p) => (p.readOnly ? "center" : "left")};
`;
const StatusButton = styled.button`
  width: 20px;
  height: 20px;
  display: flex;
  align-items: center;
  justify-content: center;
  padding: 0;
  border: 1px solid #bdbdbd;
  background: #e4e4e4;
`;
const InlineLabel = styled.label`
  display: flex;
  align-items: center;
  gap: ${(p) => p.$gap || 4}px;
  white-space: nowrap;
`;
const Grip = styled.span`
  position: absolute;
  right: 0;
  bottom: 0;
  width: 11px;
  height: 11px;
  clip-path: polygon(100% 0, 100% 100%, 0 100%);
  background: repeating-linear-gradient(135deg, transparent 0 2px, #8a8a8a 2px 3px);
`;

/* ---------- attribute table window ---------- */

const Dialog = styled.section`
  position: absolute;
  left: 1188px;
  top: 127px;
  bottom: 30px;
  width: 1085px;
  display: flex;
  flex-direction: column;
  border-radius: 5px 5px 0 0;
  background: #ededed;
  box-shadow: 0 0 1px 1px rgba(0, 0, 0, 0.35), 0 14px 26px rgba(0, 0, 0, 0.5), 0 4px 22px rgba(0, 0, 0, 0.22);
`;
const DialogBody = styled.div`
  flex: 1;
  min-height: 0;
  display: flex;
  flex-direction: column;
  padding: 20px 20px 26px;
`;
const TableFrame = styled.div`
  flex: 1;
  border: 1px solid #b0b0b0;
  border-top-color: #8c8c8c;
  background: linear-gradient(90deg, #ececec 16px, #fff 16px);
`;
const Table = styled.table`
  width: 100%;
  table-layout: fixed;
  border-spacing: 0;
  th, td { padding: 0; font-weight: 400; white-space: nowrap; overflow: hidden; }
`;
const ColHead = styled.th`
  height: 21px;
  font-size: 11px;
  line-height: 18px;
  border-right: 1px solid #c2c2c2;
  border-bottom: 1px solid #b4b4b4;
  background: linear-gradient(#fff, #f4f4f4 45%, #e6e6e6 55%, #fdfdfd);
  ${(p) => p.$sorted && css`
    border-color: #7fb0dd;
    background: linear-gradient(#b4d2ee, #9cc8ee 50%, #7db8ec 60%, #b0e0fb);
  `}
  ${(p) => p.$corner && css`border-right: 0;`}
  ${(p) => p.$filler && css`
    border: 0;
    background: #ececec;
  `}
`;
const HeadInner = styled.div`
  display: flex;
  align-items: center;
  padding-top: 2px;
  span { flex: 1; }
  &::after {
    content: "";
    display: ${(p) => (p.$sorted ? "block" : "none")};
    margin: 0 7px 4px 0;
    border: 4px solid transparent;
    border-bottom: 8px solid #44617c;
    border-top: 0;
  }
`;
const RowHead = styled.th`
  height: 20px;
  font-size: 11px;
  line-height: 19px;
  border-right: 1px solid #b9b9b9;
  border-bottom: 1px solid #b9b9b9;
  background: linear-gradient(90deg, #fff, #ededed 60%, #fafafa);
`;
const Cell = styled.td`
  height: 20px;
  line-height: 17px;
  border-right: 1px solid #a0a0a6;
  border-bottom: 1px solid #a0a0a6;
  background: ${(p) => (p.$odd ? "#eaf1fe" : "#fff")};
  text-align: ${(p) => (p.$num ? "right" : "left")};
  && { padding: 0 5px 2px; text-overflow: ellipsis; }
  ${(p) => p.$current && css`box-shadow: inset 0 0 0 2px #08ee80;`}
`;
const Controls = styled.div`
  display: flex;
  align-items: center;
  margin-top: ${(p) => p.$before}px;
  height: ${(p) => p.$h}px;
`;
const ToolStrip = styled.div`
  display: flex;
  gap: 8px;
  margin-right: 10px;
`;
const SquareTool = styled.button`
  width: 28px;
  height: 28px;
  display: flex;
  align-items: center;
  justify-content: center;
  padding: 0;
  border: 1px solid #8f8f8f;
  background: linear-gradient(#fafafa, #ececec 20%, #f2f2f2);
  &:disabled { border-color: #c0c0c0; }
  &:disabled > svg { opacity: 0.5; }
`;
const SearchLabel = styled.label`
  flex: 1;
  display: flex;
  align-items: center;
  gap: 7px;
`;
const SearchInput = styled.input`
  flex: 1;
  min-width: 0;
  height: 22px;
  border: 1px solid #d0d0d0;
  border-top: 2px solid #8a8a8a;
  border-left-color: #a0a0a0;
  background: #fff;
`;
const SelectBox = styled.span`
  position: relative;
  display: flex;
  &::after {
    content: "▲\\A▼";
    white-space: pre;
    position: absolute;
    right: 0;
    top: 0;
    width: 16px;
    height: 21px;
    padding-top: 2px;
    border: 1px solid #3b5cae;
    border-radius: 0 4px 4px 0;
    background: linear-gradient(#c5dbf5, #76aeea 50%, #b5ebff);
    font-size: 7px;
    line-height: 8px;
    text-align: center;
    pointer-events: none;
  }
`;
const Select = styled.select`
  appearance: none;
  width: 104px;
  height: 21px;
  padding: 0 6px;
  border: 1px solid #858585;
  border-radius: 4px;
  background: linear-gradient(#fff, #f4f4f4 50%, #e6e6e6 55%, #fff);
`;
const Pill = styled.button`
  width: ${(p) => p.$w}px;
  height: 22px;
  padding: 0 0 2px;
  border: 1px solid ${(p) => (p.$primary ? "#3f53a0" : "#6d6d6d")};
  border-radius: 11px;
  background: ${(p) => (p.$primary
    ? "linear-gradient(#c6dcf5, #9dc9f3 45%, #72b3f0 55%, #b9efff)"
    : "linear-gradient(#fff, #f6f6f6 45%, #e6e6e6 55%, #fff)")};
  box-shadow: 0 1px 1px rgba(0, 0, 0, 0.25);
`;
const Options = styled.div`
  flex: 1;
  display: flex;
  gap: 6px;
  padding-left: 2px;
`;
const Spacer = styled.span`
  width: ${(p) => p.$w}px;
`;

const ROWS = [1947, 1948, 1949, 1950, 1951, 1944, 1945, 1946];
const COLUMNS = ["gid", "sito_l", "area_l", "us_l", "tipo_us_l"];
const TABLE_TOOLS = [
  ["gridDark", "Deseleziona tutto"], ["gridTop", "Sposta in cima"], ["gridInvert", "Inverti selezione"], ["gridCopy", "Copia righe"],
  ["zoomSel", "Zoom alle righe"], ["pencil", "Modifica tabella"], ["del", "Elimina elementi", 1], ["gridNew", "Nuova colonna", 1],
  ["gridDel", "Elimina colonna", 1], ["calc", "Calcolatore", 1],
];

const AttributeWindow = () => {
  const [query, setQuery] = useState("");
  return (
    <Dialog aria-label="Tabella degli attributi">
      <TitleBar $active>
        <TrafficLights active />
        <WindowTitle $inset>Tabella degli attributi - pyuscarlinee :: 0 / 8 elementi selezionati</WindowTitle>
      </TitleBar>
      <DialogBody>
        <TableFrame>
          <Table>
            <colgroup>
              <col width="16" />
              {COLUMNS.map((c) => <col key={c} width="100" />)}
              <col />
            </colgroup>
            <thead>
              <tr>
                <ColHead $corner />
                {COLUMNS.map((c) => {
                  const sorted = c === "tipo_us_l";
                  return (
                    <ColHead key={c} $sorted={sorted} scope="col">
                      <HeadInner $sorted={sorted}><span>{c}</span></HeadInner>
                    </ColHead>
                  );
                })}
                <ColHead $filler />
              </tr>
            </thead>
            <tbody>
              {ROWS.map((gid, i) => (
                <tr key={gid}>
                  <RowHead scope="row">{i}</RowHead>
                  <Cell $odd={i % 2} $num>{gid}</Cell>
                  <Cell $odd={i % 2}>Via Cavour ...</Cell>
                  <Cell $odd={i % 2} $num>1</Cell>
                  <Cell $odd={i % 2} $num>140</Cell>
                  <Cell $odd={i % 2} $current={i === 7}>frattura</Cell>
                </tr>
              ))}
            </tbody>
          </Table>
        </TableFrame>
        <Controls $before={18} $h={28}>
          <ToolStrip>
            {TABLE_TOOLS.map(([name, label, off]) => (
              <SquareTool key={name} type="button" aria-label={label} disabled={!!off}>
                <Icon name={name} size={18} />
              </SquareTool>
            ))}
          </ToolStrip>
          <SearchLabel>
            Cerca
            <SearchInput type="text" value={query} onChange={(e) => setQuery(e.target.value)} />
          </SearchLabel>
          <Spacer $w={10} />
          <InlineLabel $gap={8}>
            in
            <SelectBox>
              <Select defaultValue="gid">
                {COLUMNS.map((c) => <option key={c}>{c}</option>)}
              </Select>
            </SelectBox>
          </InlineLabel>
          <Spacer $w={14} />
          <Pill type="button" $w={66} $primary>Cerca</Pill>
          <Spacer $w={6} />
        </Controls>
        <Controls $before={26} $h={22}>
          <Options>
            <InlineLabel><Check />Mostra solo i selezionati</InlineLabel>
            <InlineLabel><Check />Cerca solo i selezionati</InlineLabel>
            <InlineLabel><Check defaultChecked $blue />Maiusc/minusc</InlineLabel>
          </Options>
          <Pill type="button" $w={136}>Ricerca avanzata</Pill>
          <Spacer $w={14} />
          <Pill type="button" $w={73}>?</Pill>
          <Spacer $w={6} />
        </Controls>
      </DialogBody>
      <Grip />
    </Dialog>
  );
};

const LAYERS = [
  { name: "pyarchinit_quote", icon: "points", symbol: <Icon name="cross" size={12} /> },
  { name: "pyuscarlinee", icon: "lines", symbol: <LineSwatch />, selected: true },
  { name: "pyunitastratigrafiche", icon: "polys", symbol: <FillSwatch /> },
];

export default function App() {
  return (
    <Screen>
      <Global />
      <TitleBar>
        <TrafficLights />
        <WindowTitle>Quantum GIS 1.7.0-Wroclaw</WindowTitle>
      </TitleBar>
      <Toolbar><ToolGroups groups={TOOLBAR_TOP} /></Toolbar>
      <Toolbar><ToolGroups groups={TOOLBAR_BOTTOM} /></Toolbar>
      <Workspace>
        <Dock>
          <DockHeader>
            <h2>Layer</h2>
            <IconButton type="button" aria-label="Sgancia pannello"><Icon name="restore" size={14} /></IconButton>
            <IconButton type="button" aria-label="Chiudi pannello"><Icon name="close" size={14} /></IconButton>
          </DockHeader>
          <Layers>
            {LAYERS.map((l) => (
              <li key={l.name}>
                <LayerRow $selected={l.selected}>
                  <Disclosure />
                  <LayerLabel>
                    <Check defaultChecked $faded />
                    <LayerIcon><Icon name={l.icon} size={18} /></LayerIcon>
                    {l.name}
                  </LayerLabel>
                </LayerRow>
                <LayerSymbol>{l.symbol}</LayerSymbol>
              </li>
            ))}
          </Layers>
        </Dock>
        <Canvas><MapView /></Canvas>
      </Workspace>
      <StatusBar>
        <Message>0 elementi selezionati dal layer pyuscarlinee.</Message>
        <StatusButton type="button" aria-label="Alterna estensione"><Icon name="toggle" size={16} /></StatusButton>
        <InlineLabel $gap={9}>
          Coordinata:
          <StatusField $w={300} readOnly value="2296811.971,4922251.728" />
        </InlineLabel>
        <InlineLabel $gap={9}>
          Scala
          <StatusField $w={100} defaultValue="1:5" />
        </InlineLabel>
        <StatusButton type="button" aria-label="Ferma disegno"><Icon name="brush" size={16} /></StatusButton>
        <InlineLabel><Check defaultChecked />Aggiorna</InlineLabel>
        <span>EPSG:3004</span>
        <StatusButton type="button" aria-label="Proiezione"><Icon name="crs" size={16} /></StatusButton>
        <Grip />
      </StatusBar>
      <AttributeWindow />
    </Screen>
  );
}
